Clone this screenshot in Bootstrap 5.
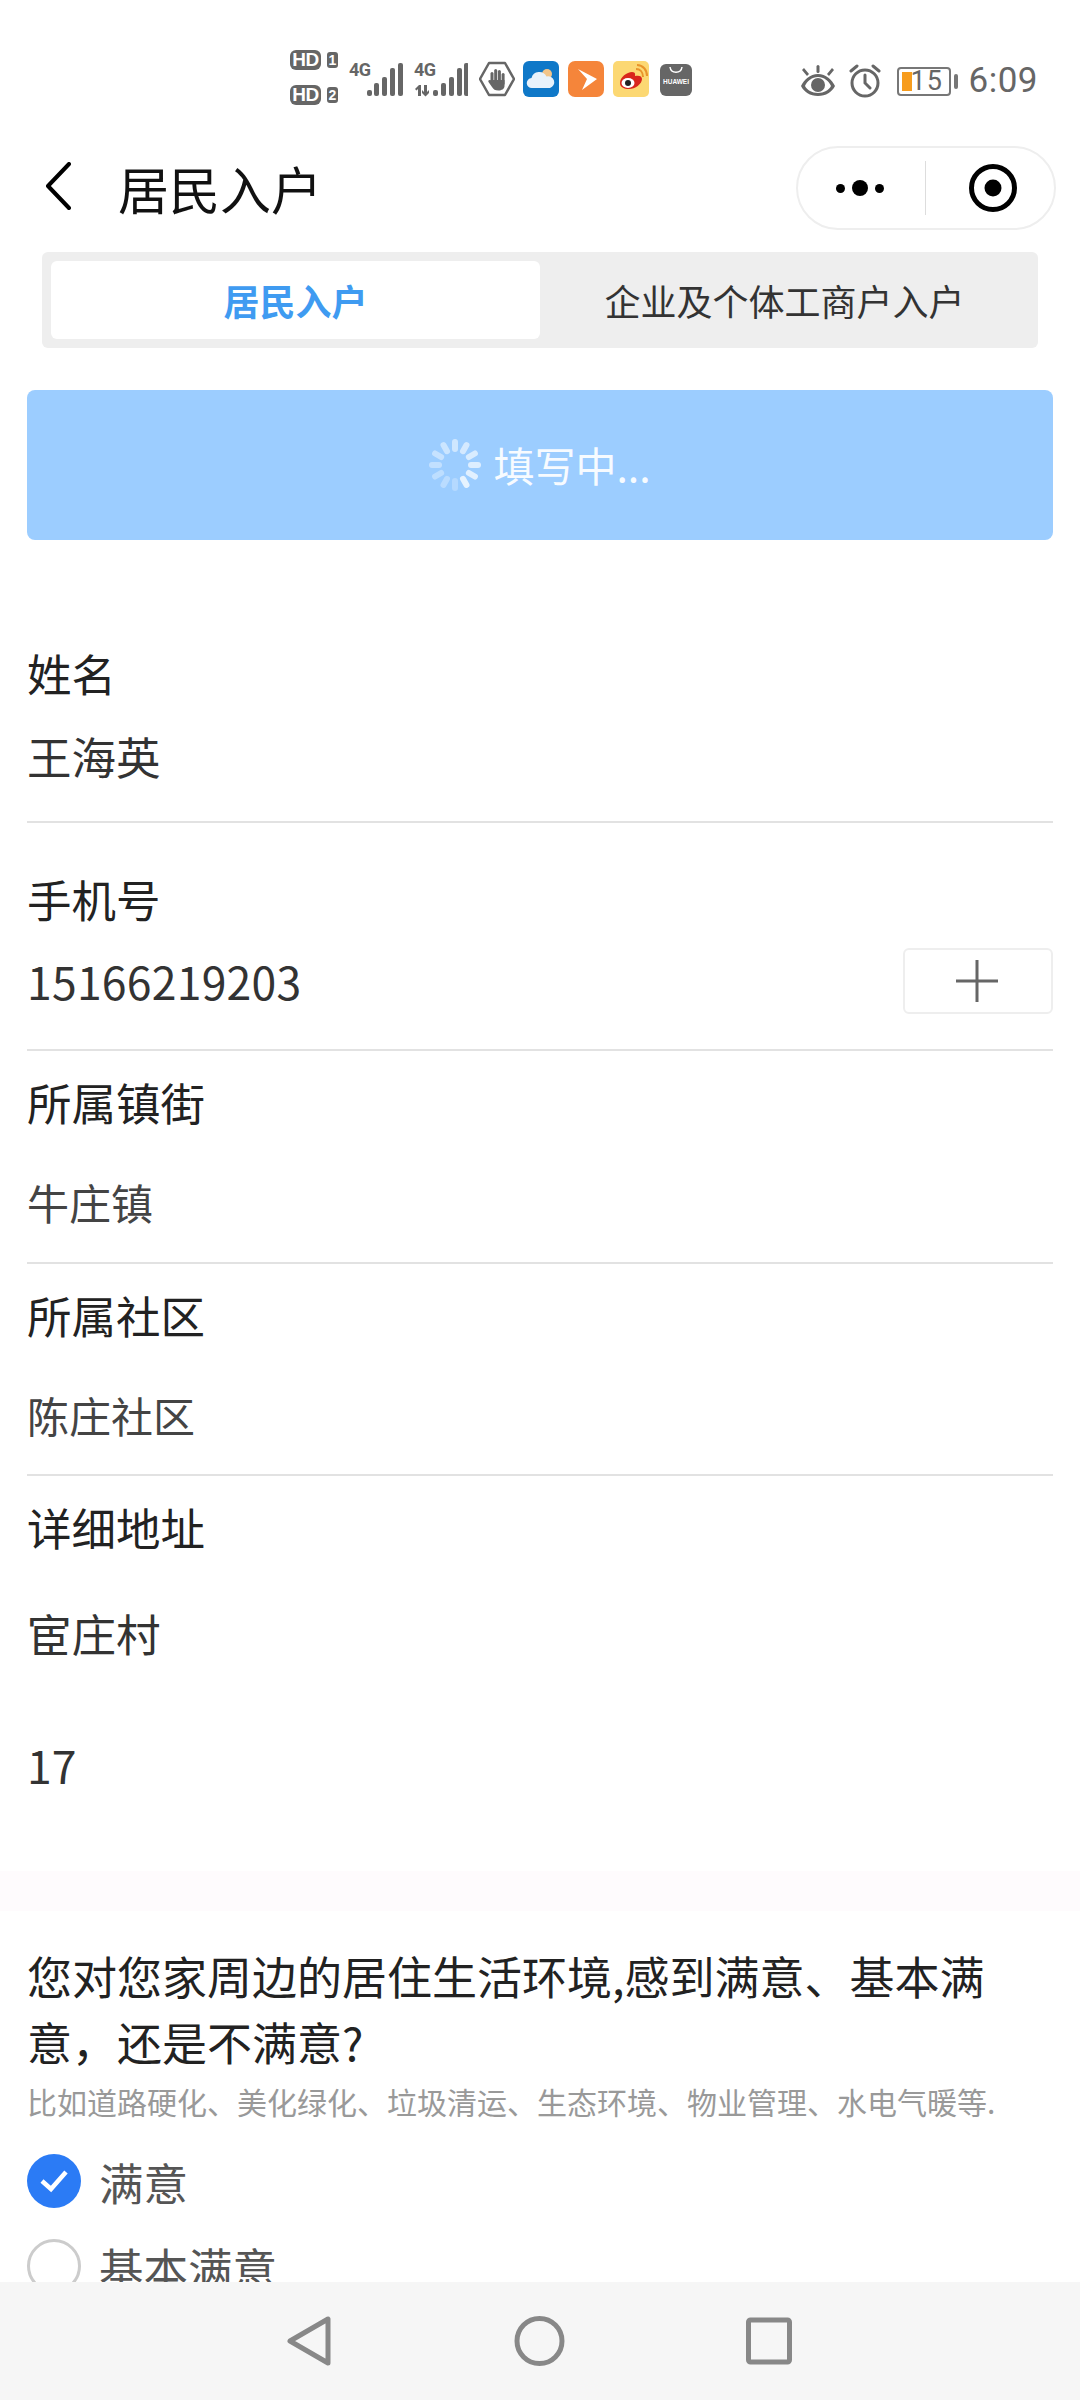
<!DOCTYPE html>
<html lang="zh-CN">
<head>
    <meta charset="UTF-8">
    <meta name="viewport" content="width=device-width, initial-scale=1.0">
    <title>居民入户</title>
    <link href="https://cdn.jsdelivr.net/npm/bootstrap@5.3.0/dist/css/bootstrap.min.css" rel="stylesheet">
    <style>
        html, body { height: 2400px; overflow: hidden; }
        body {
            font-family: "Noto Sans CJK SC", "Noto Sans", sans-serif;
            background: #fff;
            color: #222;
        }
        .phone { height: 2400px; display: flex; flex-direction: column; }
        .phone-body { flex: 1 1 auto; overflow: hidden; }

        /* status bar */
        .status-bar { height: 124px; padding: 50px 42px 0 290px; align-items: flex-start; color: #666; }
        .hd-col { width: 48px; gap: 15px; margin-right: 11px; }
        .hd-tag { display: flex; align-items: center; gap: 6px; height: 20px; }
        .hd-box { width: 31px; height: 20px; background: #666; color: #fff; border-radius: 6px; font: 700 19px/20px "Liberation Sans", sans-serif; text-align: center; letter-spacing: -.5px; }
        .hd-num { width: 11px; height: 16px; background: #666; color: #fff; border-radius: 3px; font: 700 14px/16px "Liberation Sans", sans-serif; text-align: center; }
        .signal { position: relative; width: 54px; height: 36px; margin-top: 12px; margin-right: 11px; }
        .signal svg { display: block; }
        .signal-tag { position: absolute; left: 0; top: -2px; font: 700 18px/20px "Roboto", sans-serif; letter-spacing: -.5px; }
        .app-ico { display: block; margin-top: 11px; margin-right: 9px; }
        .app-ico-first { margin-right: 8px; }
        .app-huawei { width: 32px; height: 32px; background: #666; border-radius: 6px; margin: 14px 0 0 2px; text-align: center; color: #fff; font: 700 6.5px/8px "Liberation Sans", sans-serif; padding-top: 14px; overflow: hidden; position: relative; }
        .app-huawei svg { position: absolute; left: 9px; top: 2px; }
        .status-right { margin-left: auto; align-items: center; height: 62px; }
        .alarm-ico { margin-left: 12px; }
        .batt { position: relative; width: 54px; height: 29px; border: 2px solid #777; border-radius: 4px; margin-left: 15px; font: 400 27px/25px "Roboto", sans-serif; color: #666; padding-left: 12px; letter-spacing: 1px; }
        .batt-fill { position: absolute; left: 3px; top: 3px; width: 10px; height: 19px; background: #f79c1d; }
        .batt-cap { width: 4px; height: 15px; background: #777; border-radius: 2px; margin-left: 3px; }
        .clock-txt { font: 400 35px/64px "Roboto", sans-serif; color: #666; margin-left: 11px; letter-spacing: .5px; }

        /* title bar */
        .title-bar { height: 128px; padding: 22px 24px 0 45px; align-items: flex-start; }
        .title-txt { font-size: 51px; line-height: 84px; margin-left: 47px; color: #111; }
        .capsule { width: 260px; height: 84px; border: 2px solid #eee; border-radius: 42px; margin-left: auto; align-items: center; }
        .capsule-l { width: 128px; justify-content: center; align-items: center; gap: 7px; height: 54px; border-right: 1px solid #ddd; padding-right: 4px; }
        .capsule-r { flex: 1; justify-content: center; padding-left: 5px; }
        .dot { width: 9px; height: 9px; border-radius: 50%; background: #000; }
        .dot-big { width: 16px; height: 16px; }

        /* tabs */
        .seg-tabs { margin: 0 42px; height: 96px; padding: 9px; background: #eee; border-radius: 6px; }
        .seg-tab { flex: 1 1 0; line-height: 78px; text-align: center; font-size: 36px; color: #333; border-radius: 6px; }
        .seg-tab.on { flex: 0 0 489px; background: #fff; color: #3f9bf1; font-weight: 700; }

        .fill-btn { margin: 42px 27px 0 27px; height: 150px; background: #9ccdff; border-radius: 8px; color: #fff; font-size: 41px; gap: 12px; }
        .fill-btn span { opacity: .92; }

        /* form */
        .form-area { padding: 103px 27px 0 27px; }
        .fld { border-bottom: 2px solid #e2e2e2; font-size: 44.5px; line-height: 60px; }
        .fld-plain { border-bottom: 0; }
        .fld-name { color: #222; }
        .fld-val { color: #333; }
        .val-small { font-size: 42px; color: #444; }
        .phone-num { letter-spacing: .25px; }
        .plus-box { width: 150px; height: 66px; border: 2px solid #eee; border-radius: 6px; }
        .fld-1 { padding-bottom: 35px; }
        .fld-1 .fld-val { margin-top: 23px; }
        .fld-2 { padding-top: 46px; padding-bottom: 38px; }
        .fld-2 .fld-val { margin-top: 22px; height: 60px; }
        .fld-3 { padding-top: 21px; padding-bottom: 29.500px; }
        .fld-3 .fld-val { margin-top: 40px; }
        .fld-4 { padding-top: 21px; }
        .fld-4 .fld-val { margin-top: 46px; }
        .fld-4 .fld-val + .fld-val { margin-top: 72px; }

        .soft-band { height: 40px; margin-top: 76px; background: #fefbfd; }
        .quest { padding: 32px 27px 0 27px; }
        .quest-title { font-size: 45px; line-height: 66px; color: #222; }
        .quest-hint { font-size: 30px; line-height: 40px; color: #999; margin-top: 6px; }
        .opt { height: 54px; margin-top: 33px; gap: 18px; font-size: 44.500px; color: #555; }
        .opt + .opt { margin-top: 31px; }
        .opt-label { padding-top: 3px; }
        .opt-mark { width: 54px; height: 54px; border-radius: 50%; flex: none; }
        .opt-mark.on { background: #2b7bf5; }
        .opt-mark.off { border: 3px solid #ccc; }

        .sys-nav { flex: none; height: 118px; background: #f6f6f6; position: relative; z-index: 2; }
        .sys-nav svg { position: absolute; top: 0; left: 0; }
    </style>
</head>
<body>
<div class="phone">
    <div class="phone-body">
        <div class="status-bar d-flex">
            <div class="hd-col d-flex flex-column">
                <div class="hd-tag"><span class="hd-box">HD</span><span class="hd-num">1</span></div>
                <div class="hd-tag"><span class="hd-box">HD</span><span class="hd-num">2</span></div>
            </div>
            <div class="signal">
                <span class="signal-tag">4G</span>
                <svg width="54" height="36" viewBox="0 0 54 36" fill="#666"><rect x="18" y="28" width="5" height="6" rx="2"/><rect x="25" y="21" width="5" height="13" rx="2"/><rect x="33" y="15" width="5" height="19" rx="2"/><rect x="41" y="6" width="5" height="28" rx="2"/><rect x="49" y="1" width="5" height="33" rx="2"/></svg>
            </div>
            <div class="signal">
                <span class="signal-tag">4G</span>
                <svg width="54" height="36" viewBox="0 0 54 36" fill="#666"><path d="M1 27l4-4h2v11H4v-7l-1.500 1.500zM10 23h3v7l2-2v3l-3.500 3.500L8 31v-3l2 2z"/><rect x="19" y="28" width="5" height="6" rx="2"/><rect x="27" y="21" width="5" height="13" rx="2"/><rect x="35" y="15" width="5" height="19" rx="2"/><rect x="43" y="6" width="5" height="28" rx="2"/><rect x="50" y="1" width="5" height="33" rx="2"/></svg>
            </div>
            <svg class="app-ico app-ico-first" width="36" height="36" viewBox="0 0 36 36"><path d="M10 2h16l9 16-9 16H10L1 18z" fill="none" stroke="#666" stroke-width="2.500" stroke-linejoin="round"/><g fill="#666"><rect x="11.500" y="11" width="3" height="12" rx="1.500"/><rect x="15.200" y="8" width="3" height="14" rx="1.500"/><rect x="18.900" y="9" width="3" height="13" rx="1.500"/><rect x="22.600" y="12" width="3" height="12" rx="1.500"/><path d="M11.500 19h14v6c0 3-3 4.500-6 4.500-3.500 0-5-1-6.500-3.500l-3.500-5c-.8-1.500 1-2.500 2-1.500z"/></g></svg>
            <svg class="app-ico" width="36" height="36" viewBox="0 0 36 36"><rect width="36" height="36" rx="6" fill="#0f78c8"/><circle cx="24" cy="13" r="5" fill="#f2c58a"/><path d="M9 27a5 5 0 01-.500-10 8 8 0 0115-1.500A5.800 5.800 0 0127 27z" fill="#e8f2fb"/></svg>
            <svg class="app-ico" width="36" height="36" viewBox="0 0 36 36"><rect width="36" height="36" rx="7" fill="#f5853a"/><path d="M10 8l19 10-15 11 5-11z" fill="#fff"/></svg>
            <svg class="app-ico" width="36" height="36" viewBox="0 0 36 36"><rect width="36" height="36" rx="5" fill="#fcd873"/><path d="M7 22c0-6 7-11 12-11 4 0 3 3 3 4 4-1 7 0 7 3 0 5-7 10-13 10-5 0-9-2-9-6z" fill="#d9261c"/><ellipse cx="15" cy="22" rx="6.500" ry="5" fill="#fff"/><circle cx="15" cy="22" r="3" fill="#222"/><path d="M23 8c4 0 7 3 7 8M24 4c6 0 10 5 10 11" fill="none" stroke="#e9942a" stroke-width="2"/></svg>
            <div class="app-huawei"><svg width="14" height="8" viewBox="0 0 14 8"><path d="M1 1c1 7 11 7 12 0" fill="none" stroke="#fff" stroke-width="1.500"/></svg>HUAWEI</div>
            <div class="status-right d-flex">
                <svg width="36" height="32" viewBox="0 0 36 32" fill="#666"><path d="M18 9c8 0 14 6 17 12-3 6-9 10-17 10S4 27 1 21C4 15 10 9 18 9zm0 3C12 12 7 16 5 21c2 4 7 7 13 7s11-3 13-7c-2-5-7-9-13-9z"/><circle cx="18" cy="20" r="7"/><rect x="16.500" y="0" width="3" height="8" rx="1.500"/><path d="M4 3l5 6-2 2-5-6zM32 3l-5 6 2 2 5-6z"/></svg>
                <svg class="alarm-ico" width="34" height="34" viewBox="0 0 34 34" fill="none" stroke="#666" stroke-width="3" stroke-linecap="round"><circle cx="17" cy="19" r="13"/><path d="M17 11v8l5 5M3 7l6-5M31 7l-6-5"/></svg>
                <div class="batt"><span class="batt-fill"></span>15</div>
                <span class="batt-cap"></span>
                <span class="clock-txt">6:09</span>
            </div>
        </div>

        <div class="title-bar d-flex">
            <svg class="mt-3" width="26" height="48" viewBox="0 0 26 48" fill="none" stroke="#000" stroke-width="4" stroke-linecap="round" stroke-linejoin="round"><path d="M24 2L3 24l21 22"/></svg>
            <div class="title-txt">居民入户</div>
            <div class="capsule d-flex">
                <div class="capsule-l d-flex"><span class="dot"></span><span class="dot dot-big"></span><span class="dot"></span></div>
                <div class="capsule-r d-flex">
                    <svg width="48" height="48" viewBox="0 0 48 48"><circle cx="24" cy="24" r="21.500" fill="none" stroke="#000" stroke-width="5"/><circle cx="24" cy="24" r="8.500"/></svg>
                </div>
            </div>
        </div>

        <div class="seg-tabs d-flex">
            <div class="seg-tab on">居民入户</div>
            <div class="seg-tab">企业及个体工商户入户</div>
        </div>

        <div class="fill-btn d-flex justify-content-center align-items-center">
            <svg width="52" height="52" viewBox="0 0 52 52" fill="none" stroke="#fff" stroke-width="6" stroke-linecap="round"><g id="spk"></g></svg>
            <span>填写中...</span>
        </div>

        <div class="form-area">
            <div class="fld fld-1">
                <div class="fld-name">姓名</div>
                <div class="fld-val">王海英</div>
            </div>
            <div class="fld fld-2">
                <div class="fld-name">手机号</div>
                <div class="fld-val d-flex justify-content-between align-items-center">
                    <span class="phone-num">15166219203</span>
                    <span class="plus-box d-flex justify-content-center align-items-center">
                        <svg width="44" height="42" viewBox="0 0 44 42" stroke="#666" stroke-width="3"><path d="M0 21h42M21 0v42"/></svg>
                    </span>
                </div>
            </div>
            <div class="fld fld-3">
                <div class="fld-name">所属镇街</div>
                <div class="fld-val val-small">牛庄镇</div>
            </div>
            <div class="fld fld-3">
                <div class="fld-name">所属社区</div>
                <div class="fld-val val-small">陈庄社区</div>
            </div>
            <div class="fld fld-plain fld-4">
                <div class="fld-name">详细地址</div>
                <div class="fld-val">宦庄村</div>
                <div class="fld-val">17</div>
            </div>
        </div>

        <div class="soft-band"></div>

        <div class="quest">
            <div class="quest-title">您对您家周边的居住生活环境,感到满意、基本满意，还是不满意?</div>
            <div class="quest-hint">比如道路硬化、美化绿化、垃圾清运、生态环境、物业管理、水电气暖等.</div>
            <div class="opt d-flex align-items-center">
                <span class="opt-mark on d-flex justify-content-center align-items-center">
                    <svg width="28" height="24" viewBox="0 0 28 24" fill="none" stroke="#fff" stroke-width="4.500"><path d="M2 12l9 8L26 3"/></svg>
                </span>
                <span class="opt-label">满意</span>
            </div>
            <div class="opt d-flex align-items-center">
                <span class="opt-mark off"></span>
                <span class="opt-label">基本满意</span>
            </div>
        </div>
    </div>

    <div class="sys-nav">
        <svg width="1080" height="118" viewBox="0 0 1080 118" fill="none" stroke="#888" stroke-width="5" stroke-linejoin="round">
            <path d="M328 37v44l-38-22z"/>
            <circle cx="539.500" cy="59" r="22.500"/>
            <rect x="748.500" y="38" width="41" height="42" rx="2"/>
        </svg>
    </div>
</div>
<script>
    // spinner petals, lighter toward the tail
    const spk = document.getElementById('spk');
    let petals = '';
    for (let i = 0; i < 12; i++) {
        const a = i * Math.PI / 6;
        const x1 = 26 + 16 * Math.sin(a), y1 = 26 - 16 * Math.cos(a);
        const x2 = 26 + 23 * Math.sin(a), y2 = 26 - 23 * Math.cos(a);
        const op = (0.25 + 0.5 * ((i + 6) % 12) / 11).toFixed(2);
        petals += `<line x1="${x1}" y1="${y1}" x2="${x2}" y2="${y2}" opacity="${op}"/>`;
    }
    spk.innerHTML = petals;
</script>
<script src="https://cdn.jsdelivr.net/npm/bootstrap@5.3.0/dist/js/bootstrap.bundle.min.js"></script>
</body>
</html>
